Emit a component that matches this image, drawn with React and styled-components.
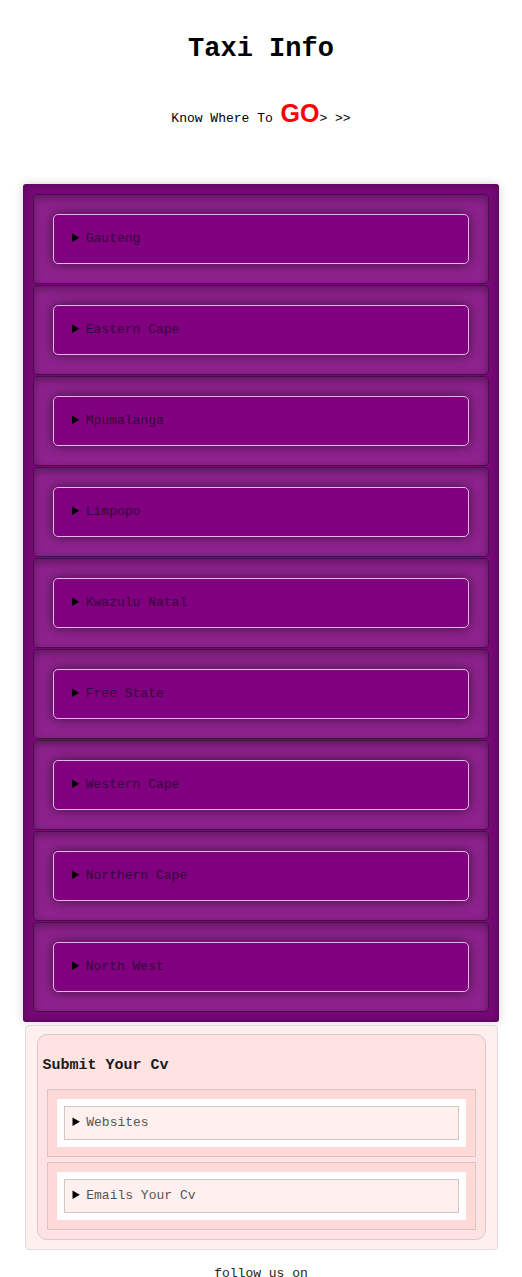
import React from "react";
import styled, { createGlobalStyle } from "styled-components";

const Global = createGlobalStyle`
  html, body { margin: 0; padding: 0; background: #ffffff; }
  body { font-family: "Liberation Mono", "Courier New", monospace; color: #000; }
`;

const Page = styled.div`
  width: 522px;
  display: flex;
  flex-direction: column;
  align-items: center;
`;

const Title = styled.h1`
  margin: 34px 0 0;
  font-family: "Liberation Mono", "Courier New", monospace;
  font-weight: bold;
  font-size: 27px;
  line-height: 30px;
`;

const Tagline = styled.p`
  margin: 34px 0 0;
  font-size: 13px;
  line-height: 30px;
  height: 30px;
`;

const Go = styled.span`
  font-family: "Liberation Sans", Arial, sans-serif;
  font-weight: bold;
  font-size: 25px;
  color: #ff0000;
`;

const Provinces = styled.div`
  margin-top: 56px;
  width: 476px;
  box-sizing: border-box;
  padding: 10px;
  background: #770877;
  border-radius: 3px;
  box-shadow: 0 0 10px rgba(0, 0, 0, 0.18), inset 0 0 8px rgba(0, 0, 0, 0.35);
  display: flex;
  flex-direction: column;
  gap: 1px;
`;

const Province = styled.details`
  box-sizing: border-box;
  padding: 19px;
  background: #8e228e;
  border: 1px solid #4a0d4a;
  border-radius: 4px;
  box-shadow: inset 0 3px 8px rgba(0, 0, 0, 0.35);
`;

const ProvinceSummary = styled.summary`
  box-sizing: border-box;
  height: 50px;
  display: list-item;
  padding: 0 0 0 18px;
  line-height: 48px;
  font-size: 13px;
  color: #35083a;
  background: #800080;
  border: 1px solid #e6b6e6;
  border-radius: 5px;
  box-shadow: 0 0 12px rgba(0, 0, 0, 0.55);
  cursor: pointer;
  &::marker { color: #000; }
`;

const CvCard = styled.div`
  margin-top: 3px;
  width: 473px;
  box-sizing: border-box;
  padding: 8px 11px 9px 11px;
  background: #fff0f0;
  border: 1px solid #dcdcdc;
  border-radius: 4px;
`;

const CvInner = styled.div`
  box-sizing: border-box;
  padding: 0 9px 9px 9px;
  background: #ffe2e2;
  border: 1px solid #dcc8c8;
  border-radius: 10px;
  display: flex;
  flex-direction: column;
  gap: 5px;
`;

const CvTitle = styled.h3`
  margin: 0 0 0 -4px;
  height: 49px;
  box-sizing: border-box;
  padding-top: 22px;
  font-size: 15px;
  line-height: 18px;
  font-weight: bold;
  color: #1a1a1a;
`;

const CvItem = styled.div`
  box-sizing: border-box;
  padding: 9px;
  background: #ffd8d8;
  border: 1px solid #d8c4c4;
`;

const CvBox = styled.details`
  padding: 7px;
  background: #ffffff;
`;

const CvSummary = styled.summary`
  box-sizing: border-box;
  height: 34px;
  padding-left: 8px;
  line-height: 32px;
  font-size: 13px;
  color: #555555;
  background: #fff0f0;
  border: 1px solid #cfc6c6;
  cursor: pointer;
  &::marker { color: #000; }
`;

const Footer = styled.p`
  margin: 16px 0 0;
  font-size: 13px;
  line-height: 16px;
  color: #222;
`;

const provinces = [
  "Gauteng",
  "Eastern Cape",
  "Mpumalanga",
  "Limpopo",
  "Kwazulu Natal",
  "Free State",
  "Western Cape",
  "Northern Cape",
  "North West",
];

export default function App() {
  return (
    <Page>
      <Global />
      <Title>Taxi Info</Title>
      <Tagline>
        Know Where To <Go>GO</Go>&gt; &gt;&gt;
      </Tagline>
      <Provinces>
        {provinces.map((p) => (
          <Province key={p}>
            <ProvinceSummary>{p}</ProvinceSummary>
          </Province>
        ))}
      </Provinces>
      <CvCard>
        <CvInner>
          <CvTitle>Submit Your Cv</CvTitle>
          <CvItem>
            <CvBox>
              <CvSummary>Websites</CvSummary>
            </CvBox>
          </CvItem>
          <CvItem>
            <CvBox>
              <CvSummary>Emails Your Cv</CvSummary>
            </CvBox>
          </CvItem>
        </CvInner>
      </CvCard>
      <Footer>follow us on</Footer>
    </Page>
  );
}
